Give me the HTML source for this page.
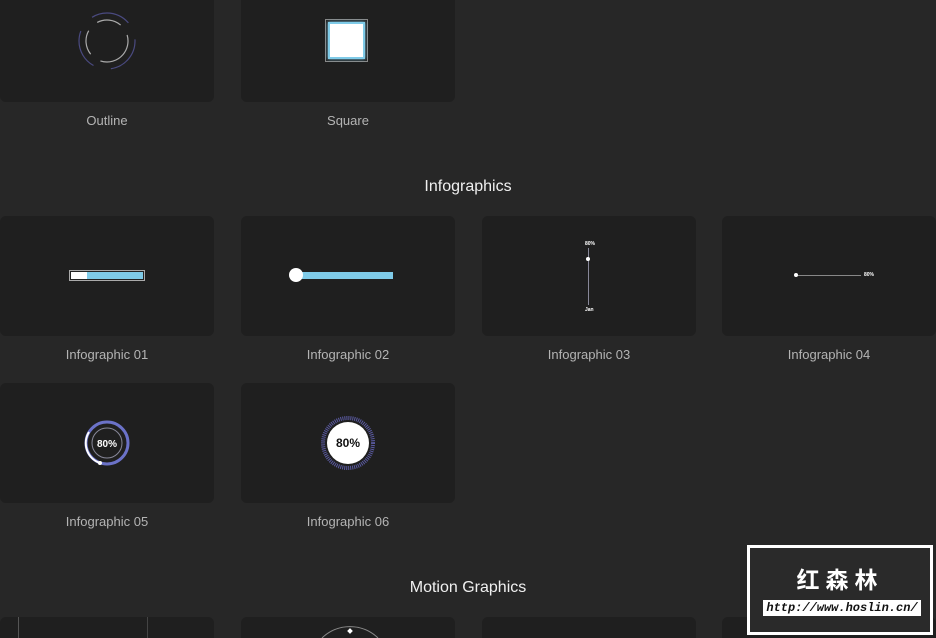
<!DOCTYPE html>
<html style="overflow:hidden;height:638px"><head><meta charset="utf-8"><style>
body{margin:0;width:936px;height:638px;background:#272727;overflow:hidden;position:relative;font-family:"Liberation Sans","Noto Sans CJK SC",sans-serif}
.c{position:absolute;width:214px;height:120px;background:#1f1f1f;border-radius:6px}
.l{position:absolute;width:214px;text-align:center;color:#b4b4b4;font-size:13px}
.h{position:absolute;width:936px;text-align:center;color:#f0f0f0;font-size:16px}
.t{font-size:5px;color:#fff;position:absolute;font-weight:bold}
</style></head><body>
<div class="c" style="left:0;top:-18px"></div>
<div class="c" style="left:241px;top:-18px"></div>
<svg style="position:absolute;left:72px;top:3px" width="70" height="76">
<circle cx="35" cy="38" r="28" fill="none" stroke="#4a4a80" stroke-width="1.2" stroke-dasharray="40 18"/>
<circle cx="35" cy="38" r="21" fill="none" stroke="#aaa" stroke-width="1.2" stroke-dasharray="25 12" transform="rotate(40 35 38)"/>
</svg>
<div style="position:absolute;left:325px;top:19px;width:43px;height:43px;border:1px solid #888;background:#222;box-sizing:border-box"></div>
<div style="position:absolute;left:328px;top:22px;width:37px;height:37px;background:#fff;border:2px solid #7fcbe8;box-sizing:border-box;box-shadow:0 0 3px #7fcbe8"></div>
<div class="l" style="left:0;top:113px">Outline</div>
<div class="l" style="left:241px;top:113px">Square</div>
<div class="h" style="top:178px">Infographics</div>
<div class="c" style="left:0;top:216px"></div>
<div class="c" style="left:241px;top:216px"></div>
<div class="c" style="left:482px;top:216px"></div>
<div class="c" style="left:722px;top:216px"></div>
<div style="position:absolute;left:69px;top:270px;width:76px;height:11px;border:1px solid #aaa;background:#222;box-sizing:border-box"></div>
<div style="position:absolute;left:71px;top:272px;width:16px;height:7px;background:#fff"></div>
<div style="position:absolute;left:87px;top:272px;width:56px;height:7px;background:#7fcbe8"></div>
<div style="position:absolute;left:296px;top:272px;width:97px;height:7px;background:#7fcbe8"></div>
<div style="position:absolute;left:289px;top:268px;width:14px;height:14px;border-radius:50%;background:#fff"></div>
<div style="position:absolute;left:588px;top:248px;width:1px;height:57px;background:#889"></div>
<div style="position:absolute;left:586px;top:257px;width:4px;height:4px;border-radius:50%;background:#fff"></div>
<div style="position:absolute;left:796px;top:275px;width:65px;height:1px;background:#888"></div>
<div style="position:absolute;left:794px;top:273px;width:4px;height:4px;border-radius:50%;background:#fff"></div>
<span class="t" style="left:864px;top:272px">80%</span>
<span class="t" style="left:585px;top:241px">80%</span>
<span class="t" style="left:585px;top:307px">Jan</span>
<div class="l" style="left:0;top:347px">Infographic 01</div>
<div class="l" style="left:241px;top:347px">Infographic 02</div>
<div class="l" style="left:482px;top:347px">Infographic 03</div>
<div class="l" style="left:722px;top:347px">Infographic 04</div>
<div class="c" style="left:0;top:383px"></div>
<div class="c" style="left:241px;top:383px"></div>
<svg style="position:absolute;left:82px;top:418px" width="50" height="50">
<circle cx="25" cy="25" r="21" fill="none" stroke="#6b72c8" stroke-width="3"/>
<path d="M18 45 A21 21 0 0 1 7 14" fill="none" stroke="#fff" stroke-width="2"/>
<circle cx="25" cy="25" r="15" fill="none" stroke="#889" stroke-width="1"/>
<circle cx="18" cy="45" r="2" fill="#fff"/>
<text x="25" y="29" text-anchor="middle" fill="#fff" font-size="10" font-weight="bold" font-family="Liberation Sans">80%</text>
</svg>
<svg style="position:absolute;left:321px;top:416px" width="54" height="54">
<circle cx="27" cy="27" r="25" fill="none" stroke="#5a5aa0" stroke-width="4" stroke-dasharray="1 1"/>
<circle cx="27" cy="27" r="21" fill="#fff"/>
<text x="27" y="31" text-anchor="middle" fill="#111" font-size="12" font-weight="bold" font-family="Liberation Sans">80%</text>
</svg>
<div class="l" style="left:0;top:514px">Infographic 05</div>
<div class="l" style="left:241px;top:514px">Infographic 06</div>
<div class="h" style="top:579px">Motion Graphics</div>
<div class="c" style="left:0;top:617px;height:21px;border-radius:6px 6px 0 0"></div>
<div class="c" style="left:241px;top:617px;height:21px;border-radius:6px 6px 0 0"></div>
<div class="c" style="left:482px;top:617px;height:21px;border-radius:6px 6px 0 0"></div>
<div class="c" style="left:722px;top:617px;height:21px;border-radius:6px 6px 0 0"></div>
<div style="position:absolute;left:18px;top:617px;width:1px;height:21px;background:#555"></div>
<div style="position:absolute;left:147px;top:617px;width:1px;height:21px;background:#444"></div>
<svg style="position:absolute;left:310px;top:626px" width="80" height="12">
<path d="M12 12 A40 40 0 0 1 68 12" fill="none" stroke="#888" stroke-width="1"/>
<rect x="38" y="3" width="4" height="4" fill="#fff" transform="rotate(45 40 5)"/>
</svg>
<div style="position:absolute;left:747px;top:545px;width:186px;height:90px;border:3px solid #fff;background:#2a2a2a;box-sizing:border-box"></div>
<div style="position:absolute;left:747px;top:561px;width:186px;text-align:center;color:#fff;font-size:23px;letter-spacing:6px;font-weight:bold">红森林</div>
<div style="position:absolute;left:763px;top:600px;width:158px;height:16px;background:#fff;color:#111;font-family:'Liberation Mono',monospace;font-style:italic;font-weight:bold;font-size:12px;line-height:16px;text-align:center">http://www.hoslin.cn/</div>
</body></html>
